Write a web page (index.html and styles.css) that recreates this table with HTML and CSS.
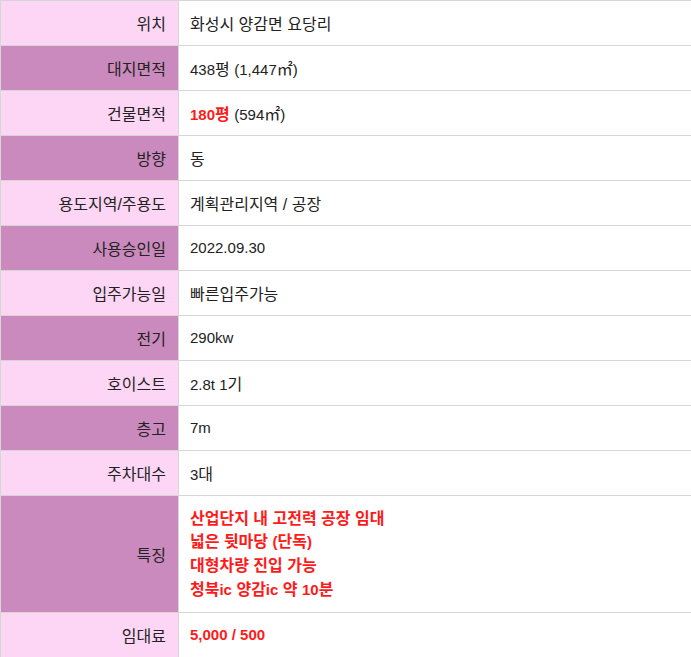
FILE: index.html
```html
<!DOCTYPE html>
<html lang="ko">
<head>
<meta charset="utf-8">
<link rel="stylesheet" href="styles.css">
</head>
<body>
<table class="info">
  <tr class="odd"><th>위치</th><td>화성시 양감면 요당리</td></tr>
  <tr class="even"><th>대지면적</th><td><span class="n">438</span>평 <span class="n">(1,447</span>㎡<span class="n">)</span></td></tr>
  <tr class="odd"><th>건물면적</th><td><b class="red"><span class="n">180</span>평</b> <span class="n">(594</span>㎡<span class="n">)</span></td></tr>
  <tr class="even"><th>방향</th><td>동</td></tr>
  <tr class="odd"><th>용도지역/주용도</th><td>계획관리지역 / 공장</td></tr>
  <tr class="even"><th>사용승인일</th><td><span class="n">2022.09.30</span></td></tr>
  <tr class="odd"><th>입주가능일</th><td>빠른입주가능</td></tr>
  <tr class="even"><th>전기</th><td><span class="n">290kw</span></td></tr>
  <tr class="odd"><th>호이스트</th><td><span class="n">2.8t 1</span>기</td></tr>
  <tr class="even"><th>층고</th><td><span class="n">7m</span></td></tr>
  <tr class="odd"><th>주차대수</th><td><span class="n">3</span>대</td></tr>
  <tr class="even feature"><th>특징</th><td><b class="red">산업단지 내 고전력 공장 임대<br>넓은 뒷마당 <span class="n">(</span>단독<span class="n">)</span><br>대형차량 진입 가능<br>청북<span class="n">ic</span> 양감<span class="n">ic</span> 약 <span class="n">10</span>분</b></td></tr>
  <tr class="odd"><th>임대료</th><td><b class="red"><span class="n">5,000 / 500</span></b></td></tr>
</table>
</body>
</html>
```
FILE: styles.css
```css
html, body {
  margin: 0;
  padding: 0;
  background: #ffffff;
}
body {
  font-family: "Liberation Sans", "Noto Sans CJK KR", sans-serif;
  font-size: 16px;
  color: #222222;
}
.n {
  font-size: 15px;
}
.info {
  width: 691px;
  border-collapse: collapse;
  border-top: 1px solid #d6d6d6;
  border-left: 1px solid #d6d6d6;
}
.info th, .info td {
  height: 45px;
  padding: 0 12px;
  border-bottom: 1px solid #d6d6d6;
  vertical-align: middle;
  box-sizing: border-box;
}
.info th {
  width: 178px;
  text-align: right;
  font-weight: normal;
  border-right: 1px solid #d6d6d6;
}
.info td {
  text-align: left;
  padding-left: 11px;
  background: #ffffff;
}
.odd th { background: #fdd6f5; }
.even th { background: #cb8abd; }
.feature th, .feature td {
  height: 117px;
}
.feature td {
  padding-top: 10px;
  padding-bottom: 10px;
  line-height: 23.6px;
}
.red { color: #ff1a1a; font-weight: bold; }
```
